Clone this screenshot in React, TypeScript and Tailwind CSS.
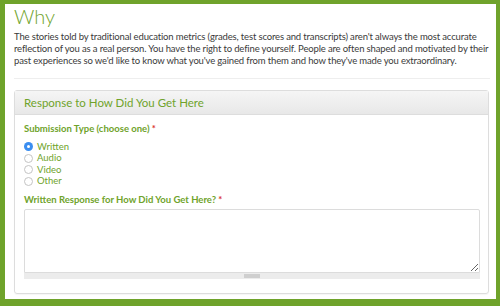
import { useState } from "react";

const options = ["Written", "Audio", "Video", "Other"];

const Radio = ({ checked }: { checked: boolean }) =>
  checked ? (
    <span className="flex h-[9px] w-[9px] items-center justify-center rounded-full bg-[#3b8ef0]">
      <span className="h-[3px] w-[3px] rounded-full bg-white" />
    </span>
  ) : (
    <span className="h-[9px] w-[9px] rounded-full border border-[#c4c4c4] bg-white" />
  );

export default function App() {
  const [type, setType] = useState("Written");

  return (
    <div className="h-[306px] w-[500px] overflow-hidden bg-[#6fa32b] pt-[4px] pr-[4px] pb-[7px] pl-[5px] font-['Lato',sans-serif]">
      <div className="h-full bg-white pt-0 pr-[6px] pl-[9px]">
        <h1 className="text-[20px] leading-[24px] font-light text-[#6fa32b]">Why</h1>
        <p className="mt-[3px] text-[9.5px] leading-[12px] tracking-[-0.15px] whitespace-nowrap text-[#3a3a3a]">
          The stories told by traditional education metrics (grades, test scores and transcripts) aren't always the most accurate
          <br />
          reflection of you as a real person. You have the right to define yourself. People are often shaped and motivated by their
          <br />
          past experiences so we'd like to know what you've gained from them and how they've made you extraordinary.
        </p>
        <hr className="mt-[11px] border-[#eeeeee]" />
        <div className="mt-[11px] mr-[1px] h-[204px] rounded-[3px] border border-[#dddddd] shadow-[0_1px_1px_rgba(0,0,0,0.04)]">
          <div className="flex h-[24px] items-center border-b border-[#dddddd] bg-gradient-to-b from-[#f5f5f5] to-[#e8e8e8] pl-[9px] text-[11.5px] text-[#6fa32b]">
            Response to How Did You Get Here
          </div>
          <div className="pt-[8px] pr-[8px] pl-[9px]">
            <div className="text-[9.5px] leading-[12px] font-bold text-[#6fa32b]">
              Submission Type (choose one) <span className="text-[#d9342b]">*</span>
            </div>
            <div className="mt-[6px] flex flex-col">
              {options.map((o) => (
                <label
                  key={o}
                  onClick={() => setType(o)}
                  className="flex h-[11.5px] cursor-pointer items-center gap-[4px] text-[9.5px] text-[#6fa32b]"
                >
                  <Radio checked={type === o} />
                  {o}
                </label>
              ))}
            </div>
            <div className="mt-[7px] text-[9.5px] leading-[12px] font-bold text-[#6fa32b]">
              Written Response for How Did You Get Here? <span className="text-[#d9342b]">*</span>
            </div>
            <div className="mt-[3px]">
              <textarea className="block h-[64px] w-full resize-y rounded-t-[2px] border border-[#dcdcdc] bg-white outline-none" />
              <div className="flex h-[6px] w-full items-center justify-center bg-[#ececec]">
                <span className="h-[4px] w-[16px] bg-[#cfcfcf]" />
              </div>
            </div>
          </div>
        </div>
      </div>
    </div>
  );
}
